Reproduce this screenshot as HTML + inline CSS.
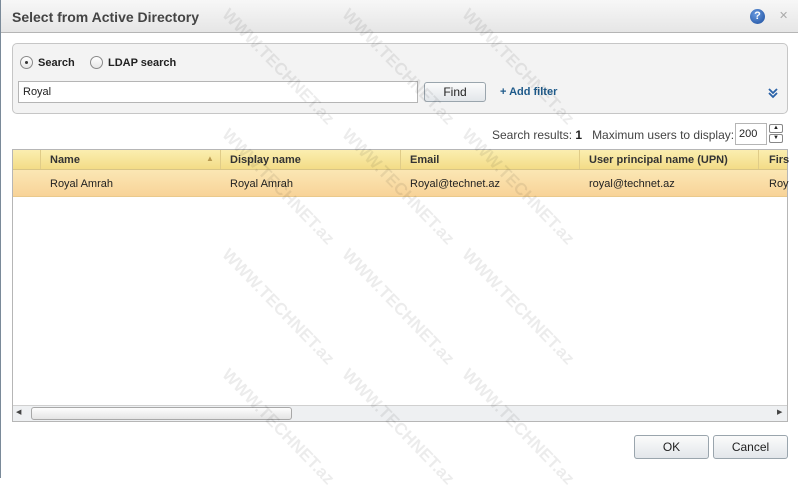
<!DOCTYPE html>
<html><head><style>
*{box-sizing:border-box;margin:0;padding:0}
body{width:798px;height:478px;background:#fff;font-family:"Liberation Sans",sans-serif;font-size:11px;color:#222;position:relative;overflow:hidden}
.a{position:absolute}
.title{left:0;top:0;width:798px;height:33px;background:linear-gradient(#f7f7f7,#e6e6e6);border-bottom:1px solid #b5b5b5}
.panel{left:12px;top:43px;width:776px;height:71px;border:1px solid #c6c6c6;border-radius:5px;background:#f3f3f3}
.radio{width:13px;height:13px;border-radius:50%;border:1px solid #8a8a8a;background:linear-gradient(#fff,#e6e6e6)}
.btn{border:1px solid #9aa5ad;border-radius:3px;background:linear-gradient(#fbfbfb,#e2e6ea);text-align:center;font-size:12px}
.grid{left:12px;top:149px;width:776px;height:273px;border:1px solid #b6b6b6;background:#fff}
.hdr{left:0;top:0;width:774px;height:20px;background:linear-gradient(#fbeeb0,#f3dc87);border-bottom:1px solid #d9c585}
.row{left:0;top:20px;width:774px;height:27px;background:linear-gradient(#fbe7b4,#f8d398);border-bottom:1px solid #e9c98c}
.c{position:absolute;top:0;height:100%;border-left:1px solid #e0cc88}
.wm{position:absolute;font-weight:bold;font-size:17px;color:#000;opacity:0.07;transform:rotate(46deg);transform-origin:0 0;white-space:nowrap}
</style></head><body>
<div class="a title"><div class="a" style="left:12px;top:9px;font-size:14px;font-weight:bold;color:#444">Select from Active Directory</div>
<div class="a" style="left:750px;top:9px;width:15px;height:15px;border-radius:50%;background:radial-gradient(circle at 40% 35%,#6a9be0,#1a4c9c);color:#fff;font-size:11px;font-weight:bold;text-align:center;line-height:15px">?</div>
<div class="a" style="left:779px;top:9px;color:#aaa;font-size:11px">✕</div></div>
<div class="a panel">
<div class="a radio" style="left:7px;top:12px"><div class="a" style="left:4px;top:4px;width:3px;height:3px;border-radius:50%;background:#333"></div></div>
<div class="a" style="left:25px;top:13px;font-weight:bold">Search</div>
<div class="a radio" style="left:77px;top:12px"></div>
<div class="a" style="left:95px;top:13px;font-weight:bold">LDAP search</div>
<div class="a" style="left:5px;top:37px;width:400px;height:22px;border:1px solid #b5b5b5;background:#fff;padding:4px 4px">Royal</div>
<div class="a btn" style="left:411px;top:38px;width:62px;height:20px;line-height:18px">Find</div>
<div class="a" style="left:487px;top:42px;color:#1e5a8a;font-weight:bold">+ Add filter</div>
<svg class="a" style="left:754px;top:43px" width="12" height="12" viewBox="0 0 12 12"><path d="M2 2l4 4 4-4M2 6l4 4 4-4" fill="none" stroke="#2a62a8" stroke-width="1.8"/></svg>
</div>
<div class="a" style="left:492px;top:128px;font-size:12px;color:#444">Search results: <b style="color:#222">1</b>&nbsp;&nbsp; Maximum users to display:</div>
<div class="a" style="left:735px;top:123px;width:32px;height:22px;border:1px solid #b5b5b5;padding:4px 3px;background:#fff">200</div>
<div class="a" style="left:769px;top:124px;width:14px;height:9px;border:1px solid #888;border-radius:2px;font-size:6px;text-align:center;line-height:7px">▲</div>
<div class="a" style="left:769px;top:134px;width:14px;height:9px;border:1px solid #888;border-radius:2px;font-size:6px;text-align:center;line-height:7px">▼</div>
<div class="a grid">
<div class="a hdr">
<div class="c" style="left:27px"></div><div class="c" style="left:207px"></div><div class="c" style="left:387px"></div><div class="c" style="left:566px"></div><div class="c" style="left:745px"></div>
<div class="a" style="left:37px;top:4px;font-weight:bold;color:#333">Name</div>
<div class="a" style="left:193px;top:4px;color:#b89a50;font-size:8px">▲</div>
<div class="a" style="left:217px;top:4px;font-weight:bold;color:#333">Display name</div>
<div class="a" style="left:397px;top:4px;font-weight:bold;color:#333">Email</div>
<div class="a" style="left:576px;top:4px;font-weight:bold;color:#333">User principal name (UPN)</div>
<div class="a" style="left:756px;top:4px;font-weight:bold;color:#333">Firs</div>
</div>
<div class="a row">
<div class="a" style="left:37px;top:8px">Royal Amrah</div>
<div class="a" style="left:217px;top:8px">Royal Amrah</div>
<div class="a" style="left:397px;top:8px">Royal@technet.az</div>
<div class="a" style="left:576px;top:8px">royal@technet.az</div>
<div class="a" style="left:756px;top:8px">Roy</div>
</div>
<div class="a" style="left:0;top:255px;width:774px;height:16px;background:#eef0f2;border-top:1px solid #d0d0d0">
<div class="a" style="left:3px;top:2px;font-size:7px;color:#444">◀</div>
<div class="a" style="left:18px;top:1px;width:261px;height:13px;border:1px solid #a8a8a8;border-radius:3px;background:linear-gradient(#fdfdfd,#e4e4e4)"></div>
<div class="a" style="left:764px;top:2px;font-size:7px;color:#444">▶</div>
</div>
</div>
<div class="a btn" style="left:634px;top:435px;width:75px;height:24px;line-height:22px">OK</div>
<div class="a btn" style="left:713px;top:435px;width:75px;height:24px;line-height:22px">Cancel</div>
<div class="a" style="left:0;top:0;width:1px;height:478px;background:#7a8a99"></div>
<div class="wm" style="left:232px;top:5px">WWW.TECHNET.az</div>
<div class="wm" style="left:352px;top:5px">WWW.TECHNET.az</div>
<div class="wm" style="left:472px;top:5px">WWW.TECHNET.az</div>
<div class="wm" style="left:232px;top:125px">WWW.TECHNET.az</div>
<div class="wm" style="left:352px;top:125px">WWW.TECHNET.az</div>
<div class="wm" style="left:472px;top:125px">WWW.TECHNET.az</div>
<div class="wm" style="left:232px;top:245px">WWW.TECHNET.az</div>
<div class="wm" style="left:352px;top:245px">WWW.TECHNET.az</div>
<div class="wm" style="left:472px;top:245px">WWW.TECHNET.az</div>
<div class="wm" style="left:232px;top:365px">WWW.TECHNET.az</div>
<div class="wm" style="left:352px;top:365px">WWW.TECHNET.az</div>
<div class="wm" style="left:472px;top:365px">WWW.TECHNET.az</div>
</body></html>
